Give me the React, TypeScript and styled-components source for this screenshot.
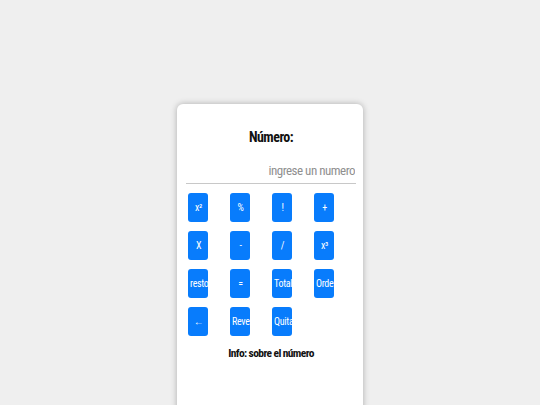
import React, { useState } from "react";
import styled, { createGlobalStyle } from "styled-components";

const GlobalStyle = createGlobalStyle`
    html, body {
        margin: 0;
        padding: 0;
        background-color: #efefef;
        font-family: Roboto, "Liberation Sans", Arial, sans-serif;
        font-stretch: 75%;
    }
`;

const Page = styled.div`
    display: flex;
    justify-content: center;
    padding-top: 104px;
    min-height: 100vh;
    box-sizing: border-box;
    overflow: hidden;
`;

const Card = styled.div`
    width: 186px;
    height: 340px;
    box-sizing: border-box;
    background-color: #ffffff;
    border-radius: 6px;
    box-shadow: 0 0 6px rgba(0, 0, 0, 0.28);
    padding: 25px 7px 0 9px;
    display: flex;
    flex-direction: column;
`;

const Title = styled.h2`
    margin: 0;
    text-align: center;
    font-size: 14px;
    font-weight: 700;
    font-stretch: 75%;
    letter-spacing: -0.5px;
    color: #111;
`;

const Display = styled.input`
    margin-top: 14px;
    width: 100%;
    box-sizing: border-box;
    border: none;
    border-bottom: 1px solid #c8c8c8;
    outline: none;
    background: transparent;
    text-align: right;
    font-family: inherit;
    font-stretch: 75%;
    font-size: 13px;
    letter-spacing: -0.5px;
    padding: 4px 1px 5px 0;
    color: #333;
    caret-color: #222;
    &::placeholder {
        color: #8f8f8f;
    }
`;

const Keys = styled.div`
    display: grid;
    grid-template-columns: repeat(4, 1fr);
    row-gap: 9px;
    margin: 9px 0 0 2px;
`;

const Key = styled.button`
    display: flex;
    align-items: center;
    justify-content: safe center;
    width: 20px;
    height: 29px;
    padding: 0 1px 0 2px;
    border: none;
    border-radius: 3px;
    background-color: #087cfc;
    color: #ffffff;
    font-family: inherit;
    font-stretch: 75%;
    font-size: 10px;
    letter-spacing: -0.3px;
    overflow: hidden;
    white-space: nowrap;
    cursor: pointer;
`;

const Info = styled.p`
    margin: 10px 0 0 0;
    text-align: center;
    font-size: 11.5px;
    font-weight: 700;
    letter-spacing: -0.6px;
    color: #111;
`;

const keys = [
    "x²", "%", "!", "+",
    "X", "-", "/", "x³",
    "resto", "=", "Total", "Orden",
    "←", "Reverso", "Quitar",
];

function App() {
    const [value, setValue] = useState("");
    return (
        <>
            <GlobalStyle />
            <Page>
                <Card>
                    <Title>Número:</Title>
                    <Display
                        autoFocus
                        placeholder="ingrese un numero"
                        value={value}
                        onChange={(e) => setValue(e.target.value)}
                    />
                    <Keys>
                        {keys.map((k) => (
                            <div key={k}>
                                <Key>
                                    <span>{k}</span>
                                </Key>
                            </div>
                        ))}
                    </Keys>
                    <Info>Info: sobre el número</Info>
                </Card>
            </Page>
        </>
    );
}

export default App;
